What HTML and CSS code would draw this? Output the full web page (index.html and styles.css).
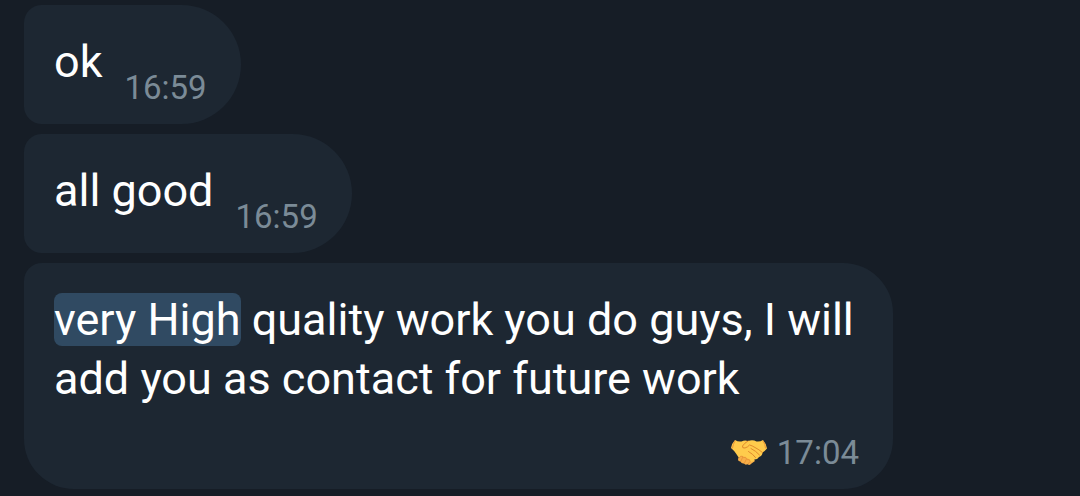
FILE: index.html
```html
<!DOCTYPE html>
<html lang="en">
<head>
  <meta charset="UTF-8" />
  <meta name="viewport" content="width=device-width, initial-scale=1.0"/>
  <title>Chat</title>
  <link rel="stylesheet" href="styles.css">
</head>
<body>

  <main class="chat">
    <div class="message">
      <p class="text">ok</p>
      <div class="meta"><time datetime="16:59">16:59</time></div>
    </div>

    <div class="message">
      <p class="text">all good</p>
      <div class="meta"><time datetime="16:59">16:59</time></div>
    </div>

    <div class="message message-long">
      <p class="text"><mark>very High</mark> quality work you do guys, I will add you as contact for future work</p>
      <div class="meta">
        <svg class="reaction" viewBox="0 0 36 28" role="img" aria-label="Handshake">
          <path fill="#f8ae48" d="M8.500 17 L7 20 Q7 22.500 9.500 22.500 Q10.500 25 13 24.500 Q14.500 26.500 16.500 25 Q18.500 27 20.500 24.500 L24 22 L20 16Z"/>
          <path fill="#ffcb4c" d="M4 1 Q7 3 10.500 2.500 Q13.500 1 17 2 Q22 .5 25.500 2.500 Q29 3 32 1 Q35.500 5 36 9.500 Q34 12 31.500 13.500 Q31.500 16.500 28 18 Q26.500 20.500 23.500 20.500 Q22 23.500 19.500 22.500 Q18 19 15.500 19 Q14 17 12 18 Q9.500 16 8 19 L5 14.500 Q3.500 12 0 9 Q1 4 4 1Z"/>
          <path fill="none" stroke="#e08a2c" stroke-width="1" stroke-linecap="round" stroke-linejoin="round" d="M17 2 Q13.500 4 11.500 7 Q11 9.500 14 9 Q17 8 18.500 6 Q21 6.500 24 8.500 Q28 10.500 31.500 13.500 M20 9.500 Q25 12 28.500 16 M17.500 12.500 Q22 15 24.500 18.500"/>
          <path fill="none" stroke="#ea9638" stroke-width="1" stroke-linecap="round" d="M8 19 Q9.500 16 12 17.500 L10 22 M12.500 18.500 Q15.500 17.500 15.500 20 L13.500 24 M16.500 20.500 Q19.500 20 19 22.500 L17 25 M4 2 Q2 5 1.500 9 M32 2 Q34.500 5 34.500 9"/>
        </svg>
        <time datetime="17:04">17:04</time>
      </div>
    </div>
  </main>

</body>
</html>
```

FILE: styles.css
```css
body {
  margin: 0;
  background: #161d26;
  font-family: Roboto, "Liberation Sans", sans-serif;
}

.chat {
  display: flex;
  flex-direction: column;
  align-items: flex-start;
  gap: 10px;
  padding: 5px 24px 7px;
}

.message {
  display: flex;
  gap: 22px;
  padding: 27px 34px 17px 30px;
  border-radius: 18px 60px 60px 18px;
  background: #1d2732;
}

.text {
  margin: 0 0 16px;
  font-size: 45px;
  line-height: 59px;
  color: #fff;
}

.text mark {
  border-radius: 8px;
  background: #304a62;
  color: inherit;
}

.meta {
  display: flex;
  align-items: center;
  align-self: flex-end;
  gap: 10px;
  font-size: 33px;
  line-height: 39px;
  color: #7b8b97;
}

.message-long {
  flex-direction: column;
  gap: 9px;
  max-width: 805px;
  border-radius: 18px 50px 50px 50px;
}

.reaction {
  width: 36px;
  height: 28px;
}
```
